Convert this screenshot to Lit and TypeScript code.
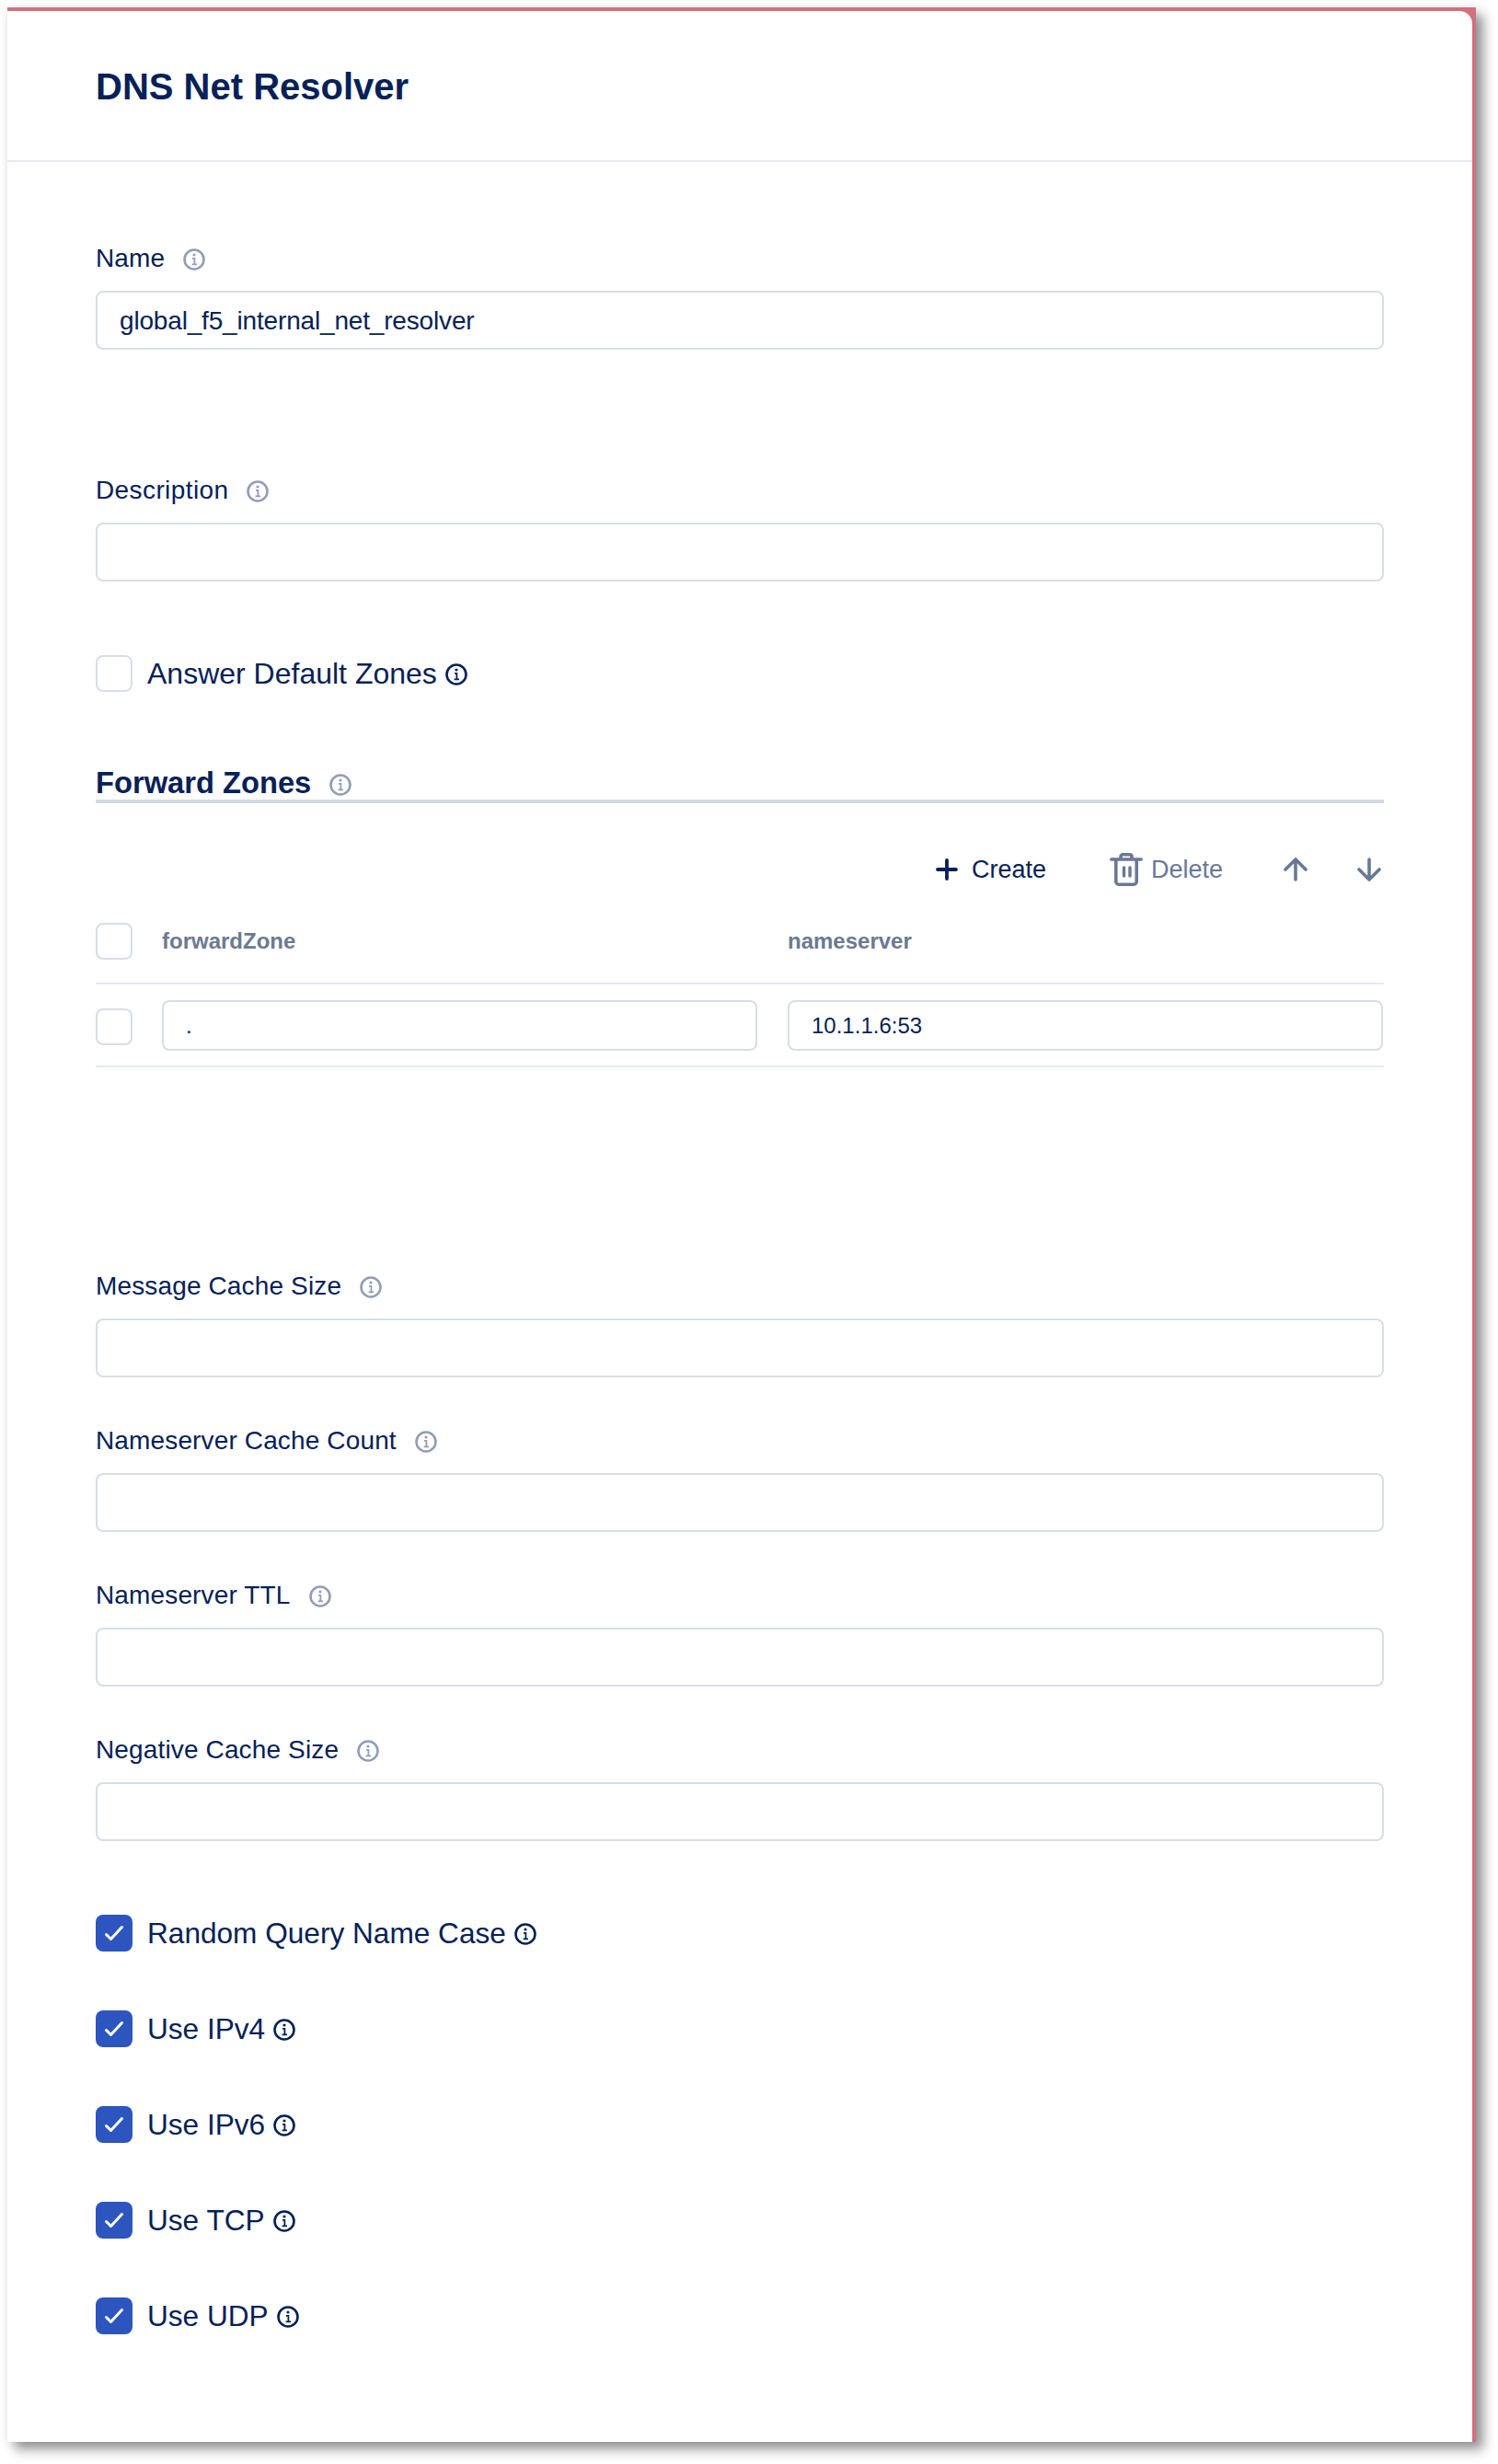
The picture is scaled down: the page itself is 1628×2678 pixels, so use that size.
import { LitElement, html, css, svg } from 'lit'
import { customElement } from 'lit/decorators.js'

const infoIcon = (dark = false) => html`
  <svg class="info ${dark ? 'dark' : ''}" viewBox="0 0 24 24" fill="none">
    <circle cx="12" cy="12" r="10.5" stroke="currentColor" stroke-width="2.6" />
    <circle cx="12" cy="7" r="1.6" fill="currentColor" />
    <path d="M10 10.8h2.4v6.4M9.6 17.4h5.4" stroke="currentColor" stroke-width="1.8" />
  </svg>
`

const checkMark = svg`<path d="M11.5 21.5l5 5L28.5 13.5" fill="none" stroke="#fff" stroke-width="3" stroke-linecap="round" stroke-linejoin="round" />`

const checkbox = (checked: boolean) => html`
  <span class="box ${checked ? 'on' : ''}">
    ${checked ? html`<svg viewBox="0 0 40 40" width="40" height="40">${checkMark}</svg>` : ''}
  </span>
`

const cacheFields = ['Message Cache Size', 'Nameserver Cache Count', 'Nameserver TTL', 'Negative Cache Size']
const flags = ['Random Query Name Case', 'Use IPv4', 'Use IPv6', 'Use TCP', 'Use UDP']

@customElement('app-root')
export class AppRoot extends LitElement {
  static styles = css`
    :host {
      display: block;
      height: 2678px;
      padding: 8px 24px 0 8px;
      box-sizing: border-box;
      background: #fff;
      font-family: 'Liberation Sans', Arial, sans-serif;
      color: #052158;
    }
    .card {
      height: 2646px;
      background: #cf727d;
      padding: 4px 4px 0 0;
      box-sizing: border-box;
      box-shadow: 8px 8px 12px rgba(0, 0, 0, 0.42), 0 0 10px rgba(0, 0, 0, 0.07);
    }
    .panel {
      height: 100%;
      background: #fff;
      border-top-right-radius: 14px;
    }
    .head {
      height: 164px;
      box-sizing: border-box;
      padding-left: 96px;
      display: flex;
      align-items: center;
      border-bottom: 2px solid #e6e9f3;
    }
    h1 {
      margin: 2px 0 0;
      font-size: 40px;
      line-height: 48px;
      font-weight: 700;
    }
    .body {
      padding: 87px 96px 0;
    }
    .label {
      display: flex;
      align-items: center;
      gap: 20px;
      height: 36px;
      margin-bottom: 17px;
      font-size: 28px;
      letter-spacing: 0.14px;
    }
    .label.wide {
      letter-spacing: 0.4px;
    }
    .info {
      width: 24px;
      height: 24px;
      flex: none;
      color: #949db5;
      margin-top: 2px;
    }
    .info.dark {
      color: #052158;
    }
    input {
      display: block;
      width: 100%;
      height: 64px;
      box-sizing: border-box;
      padding: 0 24px;
      border: 2px solid #d9dde6;
      border-radius: 8px;
      background: #fff;
      outline: none;
      font: 28px 'Liberation Sans', Arial, sans-serif;
      color: #052158;
    }
    .name-field {
      margin-bottom: 135px;
    }
    .name-field input {
      padding-top: 2px;
      letter-spacing: -0.17px;
    }
    .box {
      display: block;
      flex: none;
      width: 40px;
      height: 40px;
      box-sizing: border-box;
      border: 2px solid #d9dde6;
      border-radius: 8px;
      background: #fff;
    }
    .box.on {
      border: none;
      background: #2d55c0;
    }
    .check {
      display: flex;
      align-items: center;
      height: 40px;
      font-size: 32px;
    }
    .check .box {
      margin-right: 16px;
    }
    .check .info {
      margin-left: 9px;
    }
    .answer {
      margin: 80px 0 81px;
    }
    .section {
      display: flex;
      align-items: flex-end;
      gap: 20px;
      height: 36px;
      border-bottom: 4px solid #d4d9e3;
      font-size: 32.7px;
      line-height: 36px;
      font-weight: 700;
    }
    .section .info {
      margin-bottom: 4px;
    }
    .toolbar {
      display: flex;
      justify-content: flex-end;
      align-items: center;
      height: 64px;
      margin-top: 40px;
      padding-right: 3px;
      font-size: 27px;
      color: #6a7898;
    }
    .create {
      display: flex;
      align-items: center;
      gap: 14px;
      color: #052158;
      margin-right: 69px;
    }
    .delete {
      display: flex;
      align-items: center;
      gap: 9px;
      margin-right: 66px;
    }
    .up {
      margin-right: 54px;
    }
    .table-row {
      display: grid;
      grid-template-columns: 40px 647px 648px;
      column-gap: 32px;
      align-items: center;
      border-bottom: 2px solid #e6e8ee;
    }
    .table-head {
      padding: 26px 0 25px;
      font-size: 24px;
      font-weight: 700;
      color: #6b7a90;
    }
    .table-head span:last-child {
      margin-left: 1px;
    }
    .table-data {
      padding: 17px 0 16px;
    }
    .table-data .box {
      margin-top: 1px;
      transform: translateY(1px);
    }
    .table-data input {
      height: 55px;
      font-size: 24px;
    }
    .table-data input:last-child {
      margin-left: 1px;
      width: calc(100% - 1px);
    }
    .cache {
      margin-top: 220px;
      display: flex;
      flex-direction: column;
      gap: 51px;
    }
    .flags {
      margin-top: 80px;
      display: flex;
      flex-direction: column;
      gap: 64px;
    }
    .flags .check {
      font-size: 31.6px;
    }
  `

  render() {
    return html`
      <div class="card">
        <div class="panel">
          <div class="head"><h1>DNS Net Resolver</h1></div>
          <div class="body">
            <div class="name-field">
              <div class="label">Name ${infoIcon()}</div>
              <input value="global_f5_internal_net_resolver" />
            </div>
            <div>
              <div class="label wide">Description ${infoIcon()}</div>
              <input />
            </div>
            <div class="check answer">${checkbox(false)}Answer Default Zones ${infoIcon(true)}</div>

            <div class="section">Forward Zones ${infoIcon()}</div>
            <div class="toolbar">
              <span class="create">
                <svg width="26" height="26" viewBox="0 0 26 26" fill="none" stroke="#052158" stroke-width="3.8" stroke-linecap="round">
                  <path d="M13 3v20M3 13h20" />
                </svg>
                Create
              </span>
              <span class="delete">
                <svg width="36" height="36" viewBox="0 0 36 36" fill="none" stroke="#6a7898" stroke-width="3.6" stroke-linecap="round" stroke-linejoin="round">
                  <path d="M1.8 7h32.4M12 7V4a2.2 2.2 0 0 1 2.2-2.2h7.6A2.2 2.2 0 0 1 24 4v3M6.8 7v24.2a3 3 0 0 0 3 3h16.4a3 3 0 0 0 3-3V7" />
                  <path d="M15.5 16v9M22 16v9" stroke-width="3.4" />
                </svg>
                Delete
              </span>
              <svg class="up" width="26" height="28" viewBox="0 0 26 28" fill="none" stroke="#6a7898" stroke-width="3.6" stroke-linecap="round" stroke-linejoin="round">
                <path d="M13 25V3M2 14L13 3l11 11" />
              </svg>
              <svg width="26" height="28" viewBox="0 0 26 28" fill="none" stroke="#6a7898" stroke-width="3.6" stroke-linecap="round" stroke-linejoin="round">
                <path d="M13 3v22M2 14l11 11 11-11" />
              </svg>
            </div>
            <div class="table-row table-head">
              ${checkbox(false)}
              <span>forwardZone</span>
              <span>nameserver</span>
            </div>
            <div class="table-row table-data">
              ${checkbox(false)}
              <input value="." />
              <input value="10.1.1.6:53" />
            </div>

            <div class="cache">
              ${cacheFields.map(
                (name) => html`
                  <div>
                    <div class="label">${name} ${infoIcon()}</div>
                    <input />
                  </div>
                `,
              )}
            </div>

            <div class="flags">
              ${flags.map((name) => html`<div class="check">${checkbox(true)}${name} ${infoIcon(true)}</div>`)}
            </div>
          </div>
        </div>
      </div>
    `
  }
}
